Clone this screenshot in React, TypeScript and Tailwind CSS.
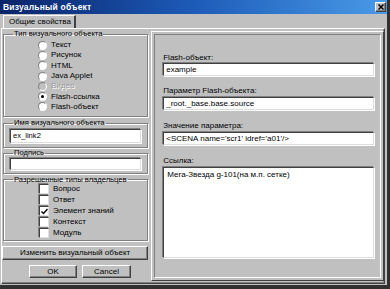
import React from "react";

const radios = [
  { label: "Текст" },
  { label: "Рисунок" },
  { label: "HTML" },
  { label: "Java Applet" },
  { label: "Видео", disabled: true },
  { label: "Flash-ссылка", checked: true },
  { label: "Flash-объект" },
];

const owners = [
  { label: "Вопрос" },
  { label: "Ответ" },
  { label: "Элемент знаний", checked: true },
  { label: "Контекст" },
  { label: "Модуль" },
];

const sunken =
  "bg-white border border-t-[#404040] border-l-[#404040] border-b-[#dcdcdc] border-r-[#dcdcdc] shadow-[-1px_-1px_0_#808080,1px_1px_0_#fff]";
const raised =
  "bg-[#c0c0c0] border border-t-white border-l-white border-b-[#404040] border-r-[#404040] shadow-[inset_-1px_-1px_0_#808080]";
const group =
  "border border-[#808080] shadow-[inset_1px_1px_0_#fff,1px_1px_0_#fff] px-[6px]";

function Radio({ checked, disabled }: { checked?: boolean; disabled?: boolean }) {
  return (
    <div
      className={`w-[9px] h-[9px] rounded-full border border-t-[#808080] border-l-[#808080] border-b-white border-r-white flex items-center justify-center ${
        disabled ? "bg-[#c0c0c0]" : "bg-white"
      }`}
    >
      {checked && <div className="w-[3px] h-[3px] rounded-full bg-black" />}
    </div>
  );
}

function Check({ checked }: { checked?: boolean }) {
  return (
    <div className="w-[10px] h-[10px] bg-white border border-t-[#404040] border-l-[#404040] border-b-[#e0e0e0] border-r-[#e0e0e0] shadow-[-1px_-1px_0_#808080] flex items-center justify-center">
      {checked && (
        <svg width="7" height="7" viewBox="0 0 7 7">
          <path d="M0.5 3.5 L2.5 5.5 L6.5 1" stroke="#000" strokeWidth="1.4" fill="none" />
        </svg>
      )}
    </div>
  );
}

export default function App() {
  return (
    <div
      className="w-[390px] h-[289px] bg-[#c0c0c0] flex flex-col text-[8px] text-black overflow-hidden border-r-[3px] border-b-[4px] border-[#303030]"
      style={{ fontFamily: '"Liberation Sans", Arial, sans-serif' }}
    >
      {/* заголовок окна */}
      <div className="h-[14px] shrink-0 flex items-center justify-between bg-gradient-to-r from-[#0a246a] via-[#1d5bb8] to-[#4a9ae8] pl-[3px] pr-[1px]">
        <span className="text-white font-bold text-[8.5px] tracking-[0.2px]">Визуальный объект</span>
        <div className={`${raised} w-[11px] h-[10px] flex items-center justify-center`}>
          <svg width="6" height="6" viewBox="0 0 6 6">
            <path d="M0.5 0.5 L5.5 5.5 M5.5 0.5 L0.5 5.5" stroke="#000" strokeWidth="1.5" />
          </svg>
        </div>
      </div>

      {/* вкладки */}
      <div className="h-[14px] shrink-0 flex items-end">
        <div className="ml-[3px] w-[73px] h-[13px] border-t border-l border-white border-r-2 border-r-[#404040] rounded-t-[1px] flex items-center pl-[5px] leading-none">
          Общие свойства
        </div>
      </div>

      {/* страница */}
      <div className="flex-1 ml-[1px] mr-[2px] mb-[1px] border-t border-l border-white border-r border-b border-r-[#404040] border-b-[#404040] shadow-[inset_-1px_-1px_0_#808080] flex">
        {/* левая колонка */}
        <div className="w-[146px] ml-[1px] flex flex-col">
          <fieldset className={`${group} pb-[4px]`}>
            <legend className="ml-[3px] px-[1px] leading-[10px] text-[7.6px]">Тип визуального объекта</legend>
            <div className="flex flex-col pt-[1px]">
              {radios.map((r) => (
                <div key={r.label} className="h-[10.3px] flex items-center pl-[28px] gap-[4px]">
                  <Radio checked={r.checked} disabled={r.disabled} />
                  <span
                    className={`leading-none ${r.disabled ? "text-[#9a9a9a] [text-shadow:1px_1px_0_#fff]" : ""}`}
                  >
                    {r.label}
                  </span>
                </div>
              ))}
            </div>
          </fieldset>

          <fieldset className={`${group} pb-[4px] mt-[1px]`}>
            <legend className="ml-[3px] px-[1px] leading-[10px] text-[7.6px]">Имя визуального объекта</legend>
            <div className={`${sunken} h-[14px] mt-[1px] flex items-center px-[2px] leading-none text-[7.6px]`}>
              ex_link2
            </div>
          </fieldset>

          <fieldset className={`${group} pb-[3px]`}>
            <legend className="ml-[3px] px-[1px] leading-[10px] text-[7.6px]">Подпись</legend>
            <div className={`${sunken} h-[12px]`} />
          </fieldset>

          <fieldset className={`${group} pb-[2px] mt-[1px]`}>
            <legend className="ml-[3px] px-[1px] leading-[9px] text-[7.6px]">Разрешенные типы владельцев</legend>
            <div className="flex flex-col">
              {owners.map((o) => (
                <div key={o.label} className="h-[10.8px] flex items-center pl-[29px] gap-[4px]">
                  <Check checked={o.checked} />
                  <span className="leading-none">{o.label}</span>
                </div>
              ))}
            </div>
          </fieldset>

          <div className={`${raised} h-[14px] mt-[5px] -ml-[1px] flex items-center justify-center leading-none`}>
            Изменить визуальный объект
          </div>

          <div className="flex mt-[5px] pl-[26px] gap-[5px]">
            <div className={`${raised} w-[48px] h-[13px] flex items-center justify-center leading-none`}>OK</div>
            <div className={`${raised} w-[49px] h-[13px] flex items-center justify-center leading-none`}>Cancel</div>
          </div>
        </div>

        {/* правая панель */}
        <div className="ml-[3px] mt-[2px] mb-[2px] w-[234px] border border-t-white border-l-white border-b-[#404040] border-r-[#404040] p-[2px]">
          <div className="h-full border border-t-[#808080] border-l-[#808080] border-b-white border-r-white flex flex-col pl-[8px] pr-[6px] pt-[18px]">
            <div className="h-[10px] flex items-center leading-none">Flash-объект:</div>
            <div className={`${sunken} h-[13px] flex items-center px-[2px] leading-none`}>example</div>

            <div className="h-[10px] mt-[10px] flex items-center leading-none">Параметр Flash-объекта:</div>
            <div className={`${sunken} h-[13px] mt-[1px] flex items-center px-[2px] leading-none`}>_root._base.base.source</div>

            <div className="h-[10px] mt-[11px] flex items-center leading-none">Значение параметра:</div>
            <div className={`${sunken} h-[13px] mt-[1px] flex items-center px-[2px] leading-none`}>
              {"<SCENA name='scr1' idref='a01'/>"}
            </div>

            <div className="h-[10px] mt-[11px] flex items-center leading-none">Ссылка:</div>
            <div className={`${sunken} h-[91px] mt-[1px] px-[3px] pt-[3px] leading-none`}>
              Мега-Звезда g-101(на м.п. сетке)
            </div>
          </div>
        </div>
      </div>
    </div>
  );
}
